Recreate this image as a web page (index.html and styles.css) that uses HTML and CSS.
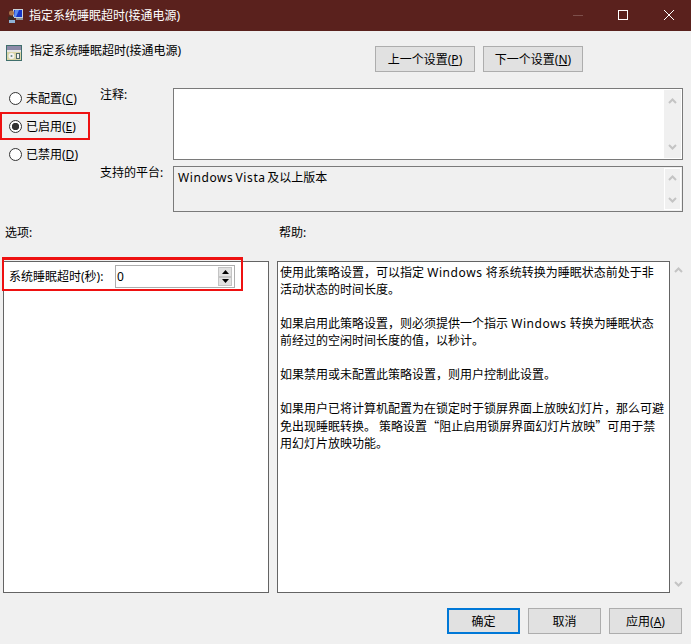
FILE: index.html
```html
<!DOCTYPE html>
<html lang="zh-CN">
<head>
<meta charset="utf-8">
<title>指定系统睡眠超时(接通电源)</title>
<link rel="stylesheet" href="styles.css">
</head>
<body>
<div class="dialog">
  <header class="titlebar">
    <svg class="title-icon" width="16" height="16" viewBox="0 0 16 16">
      <rect x="5" y="1" width="10" height="9" fill="#c9d3dc"/>
      <rect x="6" y="2" width="8" height="7" fill="#1636c8"/>
      <path d="M7 2h4l-3 7H6z" fill="#5f8ef0"/>
      <rect x="8" y="10" width="7" height="2" fill="#8a8f96"/>
      <circle cx="3.5" cy="5" r="2.5" fill="#a9744a"/>
      <path d="M0 9q3-2 6 0v3H0z" fill="#3a2a24"/>
      <path d="M1 12h6v3H1z" fill="#8fb2d6"/>
    </svg>
    <span class="title-text">指定系统睡眠超时(接通电源)</span>
    <div class="win-controls">
      <svg width="46" height="31" viewBox="0 0 46 31"><path d="M20 15.5h10" stroke="#7d4f4b" stroke-width="1"/></svg>
      <svg width="46" height="31" viewBox="0 0 46 31"><rect x="19.5" y="10.5" width="9" height="9" fill="none" stroke="#fff" stroke-width="1"/></svg>
      <svg width="46" height="31" viewBox="0 0 46 31"><path d="M19 10l10 10M29 10l-10 10" stroke="#fff" stroke-width="1"/></svg>
    </div>
  </header>

  <section class="heading">
    <svg class="policy-icon" width="16" height="16" viewBox="0 0 16 16">
      <rect x="0" y="0" width="16" height="16" fill="#3f6f6c"/>
      <rect x="1" y="1" width="14" height="4" fill="#8d8aa8"/>
      <rect x="1" y="5" width="14" height="2" fill="#e6e6e6"/>
      <rect x="1" y="7" width="14" height="8" fill="#d9d6a8"/>
      <circle cx="5.5" cy="11" r="3" fill="#f2f2f2"/>
      <circle cx="5.5" cy="11" r="1" fill="#6a8a88"/>
      <rect x="10.5" y="8.5" width="3" height="5" fill="#eeeeee" stroke="#506a68" stroke-width="1"/>
    </svg>
    <span class="heading-text">指定系统睡眠超时(接通电源)</span>
    <div class="nav-buttons">
      <button class="btn btn-nav">上一个设置(<u>P</u>)</button>
      <button class="btn btn-nav">下一个设置(<u>N</u>)</button>
    </div>
  </section>

  <section class="state-grid">
    <div class="radios">
      <label class="radio-row"><input class="radio" type="radio" name="state">未配置(<u>C</u>)</label>
      <label class="radio-row radio-marked"><input class="radio" type="radio" name="state" checked>已启用(<u>E</u>)</label>
      <label class="radio-row"><input class="radio" type="radio" name="state">已禁用(<u>D</u>)</label>
    </div>
    <div class="field-label label-note">注释:</div>
    <div class="box box-note">
      <div class="scroll-track">
        <svg class="chev" width="9" height="6" viewBox="0 0 9 6"><path d="M1 5l3.5-3.5L8 5" fill="none" stroke="#c4c4c4" stroke-width="2"/></svg>
        <svg class="chev" width="9" height="6" viewBox="0 0 9 6"><path d="M1 1l3.5 3.5L8 1" fill="none" stroke="#c4c4c4" stroke-width="2"/></svg>
      </div>
    </div>
    <div class="field-label label-platform">支持的平台:</div>
    <div class="box box-platform">
      <div class="platform-text"><span class="latin">Windows Vista</span> 及以上版本</div>
      <div class="scroll-track scroll-track-edge">
        <svg class="chev" width="9" height="6" viewBox="0 0 9 6"><path d="M1 5l3.5-3.5L8 5" fill="none" stroke="#c4c4c4" stroke-width="2"/></svg>
        <svg class="chev" width="9" height="6" viewBox="0 0 9 6"><path d="M1 1l3.5 3.5L8 1" fill="none" stroke="#c4c4c4" stroke-width="2"/></svg>
      </div>
    </div>
  </section>

  <section class="captions">
    <div class="caption-options">选项:</div>
    <div>帮助:</div>
  </section>

  <section class="panels">
    <div class="panel panel-options">
      <div class="spin-row">
        <span class="spin-label">系统睡眠超时(秒):</span>
        <div class="spin-input">
          <span class="spin-value">0</span>
          <div class="spinner">
            <div class="spin-btn"><svg width="7" height="4" viewBox="0 0 7 4"><path d="M3.5 0L7 4H0z" fill="#000"/></svg></div>
            <div class="spin-btn"><svg width="7" height="4" viewBox="0 0 7 4"><path d="M0 0h7L3.5 4z" fill="#000"/></svg></div>
          </div>
        </div>
      </div>
      <div class="mark-box"></div>
    </div>
    <div class="panel panel-help">
      <p>使用此策略设置，可以指定 <span class="latin">Windows</span> 将系统转换为睡眠状态前处于非<br>活动状态的时间长度。</p>
      <p>如果启用此策略设置，则必须提供一个指示 <span class="latin">Windows</span> 转换为睡眠状态<br>前经过的空闲时间长度的值，以秒计。</p>
      <p>如果禁用或未配置此策略设置，则用户控制此设置。</p>
      <p>如果用户已将计算机配置为在锁定时于锁屏界面上放映幻灯片，那么可避<br>免出现睡眠转换。 策略设置<span class="cjk">“</span>阻止启用锁屏界面幻灯片放映<span class="cjk">”</span>可用于禁<br>用幻灯片放映功能。</p>
    </div>
    <div class="help-scroll">
      <svg class="chev" width="9" height="6" viewBox="0 0 9 6"><path d="M1 5l3.5-3.5L8 5" fill="none" stroke="#c4c4c4" stroke-width="2"/></svg>
      <svg class="chev" width="9" height="6" viewBox="0 0 9 6"><path d="M1 1l3.5 3.5L8 1" fill="none" stroke="#c4c4c4" stroke-width="2"/></svg>
    </div>
  </section>

  <footer class="footer">
    <button class="btn btn-foot btn-primary">确定</button>
    <button class="btn btn-foot">取消</button>
    <button class="btn btn-foot">应用(<u>A</u>)</button>
  </footer>
</div>
</body>
</html>
```

FILE: styles.css
```css
* { box-sizing: border-box; }
html, body { margin: 0; padding: 0; }
body {
  width: 691px;
  height: 644px;
  overflow: hidden;
  background: #f0f0f0;
  color: #000;
  font-family: "Noto Sans", "Noto Sans CJK SC", sans-serif;
  font-size: 12px;
  line-height: 17px;
}
.dialog { width: 691px; height: 644px; }
.latin { letter-spacing: 0.6px; }
.cjk { font-family: "Noto Sans CJK SC", sans-serif; }

.titlebar {
  height: 31px;
  background: #5a211d;
  color: #fff;
  display: flex;
  align-items: center;
  padding-left: 8px;
}
.title-text { margin-left: 5px; }
.win-controls { margin-left: auto; display: flex; }

.heading {
  height: 53px;
  display: flex;
  align-items: flex-start;
  padding: 14px 108px 0 6px;
}
.heading-text { margin: -3px 0 0 8px; }
.nav-buttons { margin-left: auto; margin-top: 1px; display: flex; gap: 8px; }

.btn {
  font: inherit;
  color: #000;
  background: #e1e1e1;
  border: 1px solid #adadad;
  padding: 0;
  height: 26px;
}
.btn-nav { width: 100px; }
.btn-foot { width: 73px; }
.btn-primary { border: 2px solid #0078d7; }

.state-grid {
  display: grid;
  grid-template-columns: 100px 73px 510px;
  grid-template-rows: 76px 46px;
  row-gap: 6px;
  height: 128px;
}
.radios { grid-row: 1 / 3; grid-column: 1; }
.radio-row {
  height: 28px;
  width: 90px;
  display: flex;
  align-items: center;
  padding-left: 9px;
}
.radio-marked { outline: 2px solid #ee1111; outline-offset: -2px; }
.radio {
  appearance: none;
  -webkit-appearance: none;
  width: 13px;
  height: 13px;
  margin: 0 4px 0 0;
  border: 1px solid #333;
  border-radius: 50%;
  background: #fff;
  flex: none;
}
.radio:checked { background: radial-gradient(circle, #333 0 3.4px, #fff 4px); }

.field-label { grid-column: 2; }
.label-note { padding-top: 2px; }
.label-platform { margin-top: -2px; }
.box {
  grid-column: 3;
  border: 1px solid #7a7a7a;
  display: flex;
  justify-content: flex-end;
}
.box-note { margin-top: 4px; background: #fff; padding: 1px; }
.box-platform { background: #f0f0f0; padding: 1px; }
.platform-text { flex: 1; padding: 1px 0 0 3px; word-spacing: -1.6px; }
.scroll-track {
  width: 17px;
  background: #f0f0f0;
  display: flex;
  flex-direction: column;
  align-items: center;
  justify-content: space-between;
  padding: 8px 0;
}
.scroll-track-edge { border: 1px solid #fff; padding: 6px 0; }
.chev { display: block; }

.captions {
  height: 49px;
  display: flex;
  padding: 12px 0 0 5px;
}
.caption-options { width: 274px; }

.panels {
  height: 332px;
  display: flex;
  padding-left: 3px;
}
.panel {
  background: #fff;
  border: 1px solid #646464;
  position: relative;
}
.panel-options { width: 266px; }
.panel-help { width: 393px; margin-left: 8px; padding: 2px 0 0 2px; }
.panel-help p { margin: 0 0 17px; white-space: nowrap; }
.help-scroll {
  width: 17px;
  display: flex;
  flex-direction: column;
  align-items: center;
  justify-content: space-between;
  padding: 6px 0;
}

.spin-row {
  display: flex;
  align-items: center;
  padding: 3px 0 0 5px;
}
.spin-label { width: 106px; }
.spin-input {
  width: 120px;
  height: 23px;
  border: 1px solid #adadad;
  background: #fff;
  display: flex;
  align-items: center;
  justify-content: space-between;
  padding: 1px;
}
.spinner { width: 14px; height: 19px; display: flex; flex-direction: column; margin-right: 1px; }
.spin-btn {
  flex: 1;
  background: #e1e1e1;
  border: 1px solid #c4c4c4;
  display: flex;
  align-items: center;
  justify-content: center;
}
.spin-btn svg { display: block; }
.mark-box {
  position: absolute;
  left: -2px;
  top: -5px;
  width: 241px;
  height: 34px;
  border-style: solid;
  border-color: #ee1111;
  border-width: 3px 2px 2px;
  pointer-events: none;
}

.footer {
  display: flex;
  justify-content: flex-end;
  gap: 8px;
  padding: 15px 9px 0 0;
}
```
